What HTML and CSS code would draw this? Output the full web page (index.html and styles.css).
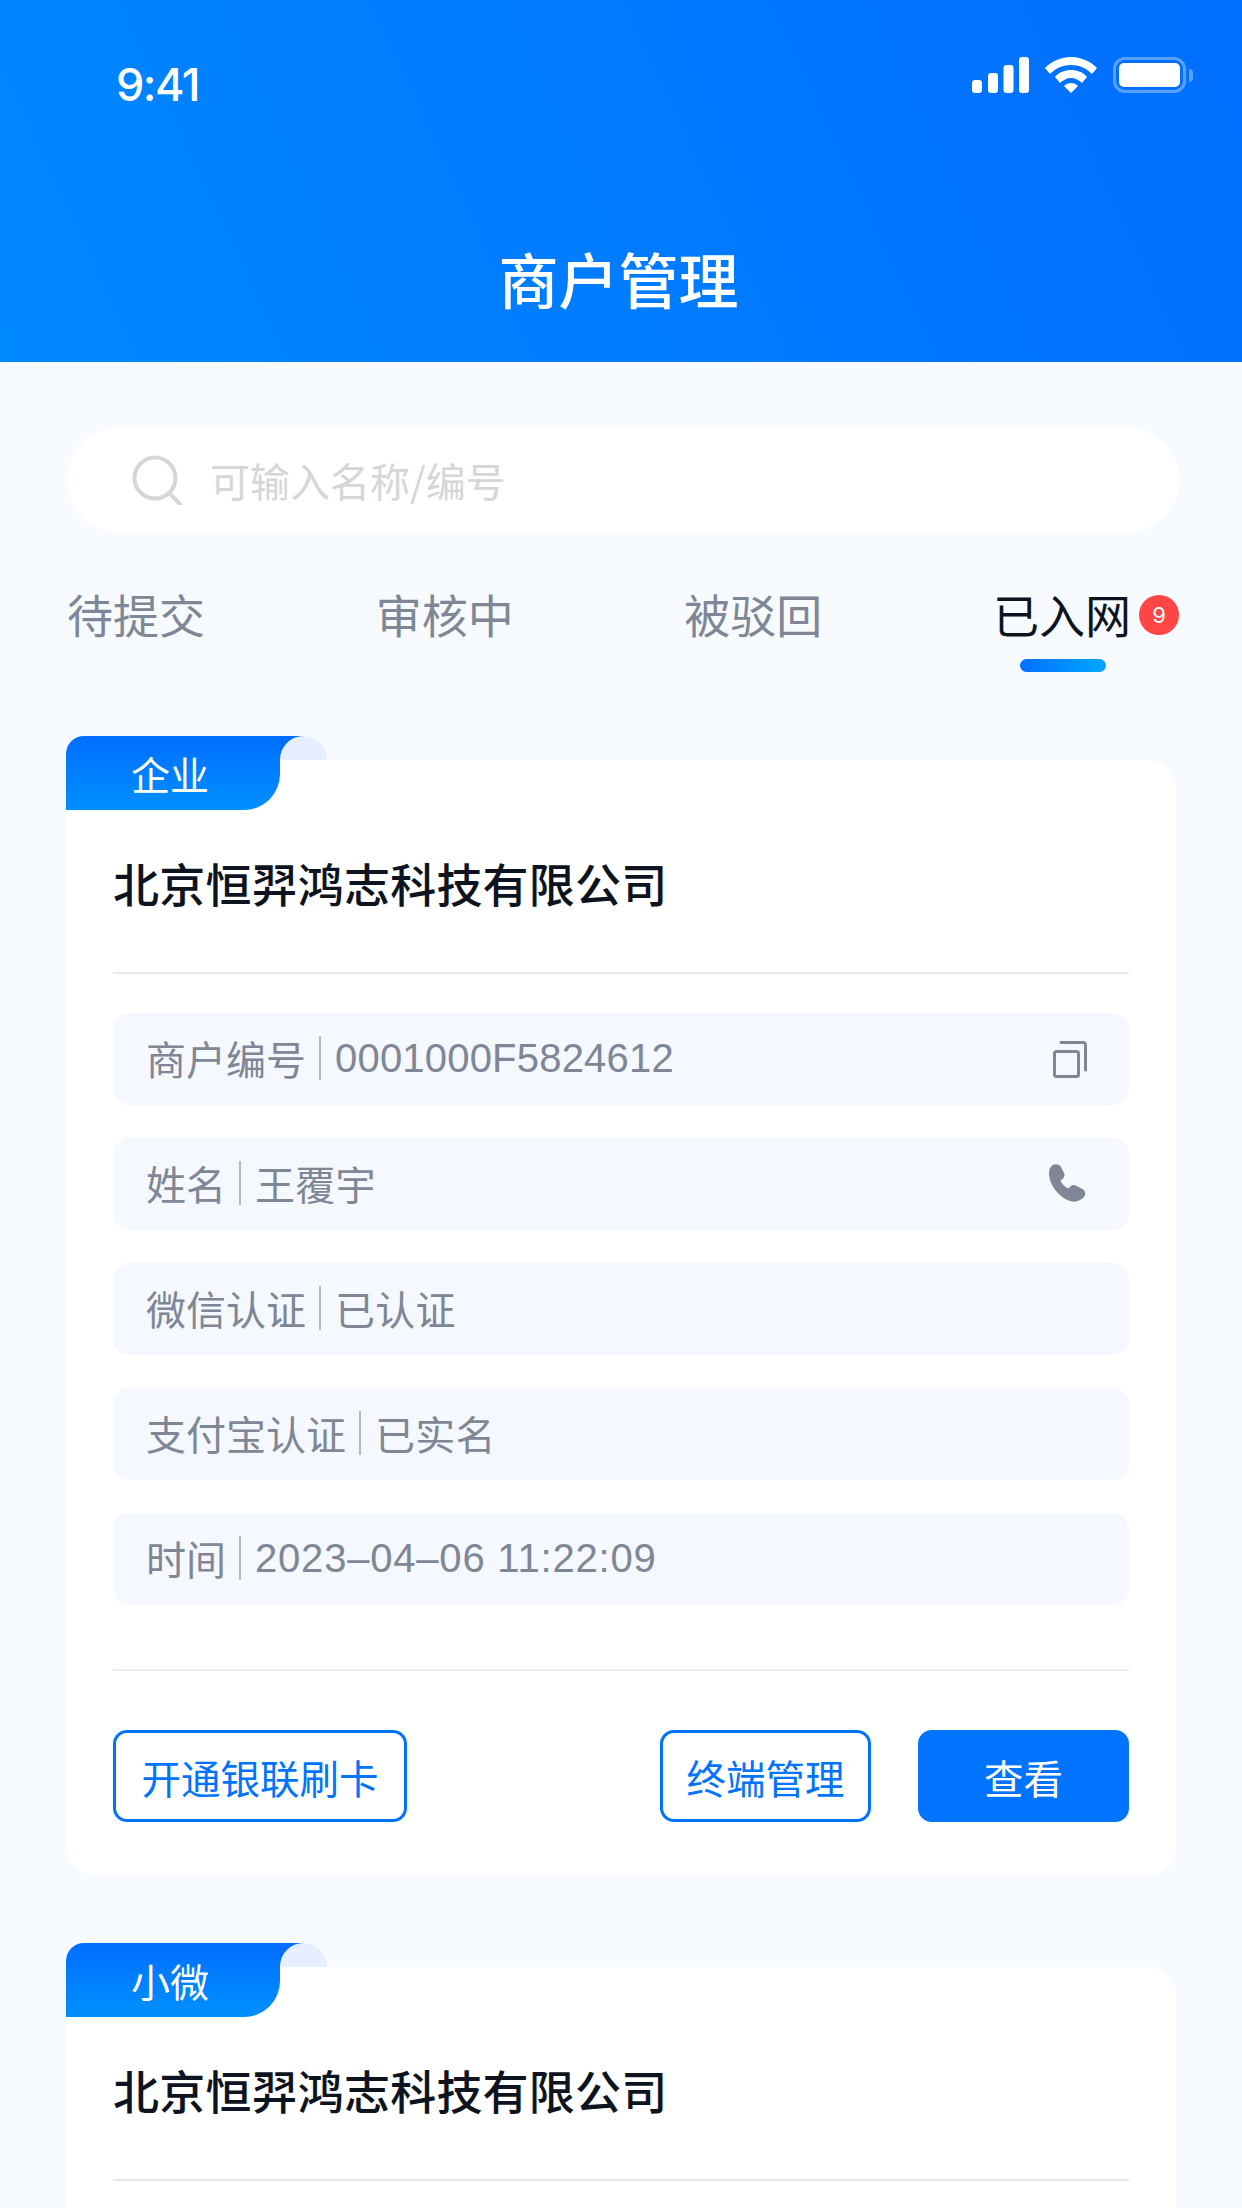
FILE: index.html
```html
<!DOCTYPE html>
<html lang="zh-CN">
<head>
    <meta charset="UTF-8">
    <meta name="viewport" content="width=device-width, initial-scale=1.0">
    <title>商户管理</title>
    <link rel="stylesheet" href="styles.css">
</head>
<body>
    <header class="header">
        <div class="status-bar">
            <span class="time">9:41</span>
            <div class="status-icons">
                <svg class="signal" width="57" height="36" viewBox="0 0 57 36">
                    <rect x="0" y="23" width="10" height="13" rx="3"/>
                    <rect x="16" y="16" width="10" height="20" rx="3"/>
                    <rect x="31.500" y="8" width="10" height="28" rx="3"/>
                    <rect x="47" y="0" width="10" height="36" rx="3"/>
                </svg>
                <svg class="wifi" width="52" height="36" viewBox="0 0 52 36">
                    <path d="M26 0C16 0 7 4 0 11l5 6c6-6 13-9 21-9s15 3 21 9l5-6C45 4 36 0 26 0z"/>
                    <path d="M26 13c-6 0-12 2-16 7l5 6c3-3 7-5 11-5s8 2 11 5l5-6c-4-5-10-7-16-7z"/>
                    <path d="M26 26c-3 0-5 1-7 3l7 7 7-7c-2-2-4-3-7-3z"/>
                </svg>
                <div class="battery">
                    <div class="battery-body"><div class="battery-level"></div></div>
                    <div class="battery-cap"></div>
                </div>
            </div>
        </div>
        <h1 class="page-title">商户管理</h1>
    </header>

    <main class="content">
        <div class="search">
            <svg width="50" height="50" viewBox="0 0 50 50" fill="none" stroke="#d6d6d6" stroke-width="4">
                <circle cx="23" cy="23" r="20.500"/>
                <path d="M37 38l11 11" stroke-linecap="round"/>
            </svg>
            <span class="search-text">可输入名称/编号</span>
        </div>

        <nav class="tabs">
            <div class="tab">待提交</div>
            <div class="tab">审核中</div>
            <div class="tab">被驳回</div>
            <div class="tab active">已入网<span class="badge">9</span></div>
        </nav>

        <section class="card">
            <div class="tag"><span>企业</span></div>
            <h2 class="card-title">北京恒羿鸿志科技有限公司</h2>
            <div class="rows">
                <div class="row">
                    <span class="row-label">商户编号</span><span class="row-value">0001000F5824612</span>
                    <svg class="row-icon icon-copy" width="34" height="37" viewBox="0 0 34 37" fill="none" stroke="#7f8695" stroke-width="3">
                        <rect x="1.500" y="10.500" width="24" height="25" rx="2"/>
                        <path d="M8 1.500h22a2.500 2.500 0 0 1 2.500 2.500v25" stroke-linecap="round"/>
                    </svg>
                </div>
                <div class="row">
                    <span class="row-label">姓名</span><span class="row-value">王覆宇</span>
                    <svg class="row-icon" width="38" height="38" viewBox="0 0 38 38" fill="#7f8695">
                        <path d="M3 1.500C6-.5 10-.5 12 3l3 6c1 2 .5 4-1 5.500l-2.500 2c1.500 3.500 4 6 7.500 8l2.500-2c1.500-1.500 3.500-1.800 5.500-.8l6.500 3.300c3 1.500 3.500 5.500 1.500 8C32 36 28 38.500 23 37.500 12 35 2 24 .2 12 -.5 7.500 .5 4 3 1.500z"/>
                    </svg>
                </div>
                <div class="row">
                    <span class="row-label">微信认证</span><span class="row-value">已认证</span>
                </div>
                <div class="row">
                    <span class="row-label">支付宝认证</span><span class="row-value">已实名</span>
                </div>
                <div class="row">
                    <span class="row-label">时间</span><span class="row-value row-time">2023–04–06 11:22:09</span>
                </div>
            </div>
            <div class="actions">
                <button class="btn btn-wide">开通银联刷卡</button>
                <div class="actions-right">
                    <button class="btn">终端管理</button>
                    <button class="btn btn-primary">查看</button>
                </div>
            </div>
        </section>

        <section class="card">
            <div class="tag"><span>小微</span></div>
            <h2 class="card-title">北京恒羿鸿志科技有限公司</h2>
        </section>
    </main>
</body>
</html>
```

FILE: styles.css
```css
* {
    box-sizing: border-box;
}
html, body {
    height: 2208px;
    overflow: hidden;
}
body {
    margin: 0;
    background: #f7faff;
    font-family: "Noto Sans CJK SC", "Noto Sans", sans-serif;
    color: #0d1420;
}
.header {
    height: 362px;
    background: linear-gradient(65deg, #0088ff, #006eff);
    color: #fff;
    padding: 57px 49px 0 116px;
}
.status-bar {
    display: flex;
    justify-content: space-between;
    height: 53px;
}
.time {
    font-family: Inter, sans-serif;
    font-size: 45px;
    font-weight: 500;
    line-height: 56px;
    letter-spacing: -1.500px;
}
.status-icons {
    display: flex;
    align-items: flex-start;
    gap: 16px;
}
.signal, .wifi {
    fill: #fff;
}
.battery {
    display: flex;
    align-items: center;
    gap: 3px;
}
.battery-body {
    width: 73px;
    height: 36px;
    padding: 3px;
    border: 3px solid rgba(255, 255, 255, 0.35);
    border-radius: 12px;
}
.battery-level {
    height: 100%;
    background: #fff;
    border-radius: 5px;
}
.battery-cap {
    width: 4px;
    height: 13px;
    background: rgba(255, 255, 255, 0.35);
    border-radius: 0 4px 4px 0;
}
.page-title {
    margin: 0 -44px 0 -116px;
    padding-top: 128px;
    text-align: center;
    font-size: 60px;
    font-weight: 500;
    line-height: 80px;
}
.content {
    padding: 65px 66px 0;
}
.search {
    display: flex;
    align-items: center;
    gap: 28px;
    height: 106px;
    padding-left: 65px;
    margin: 0 -3px 0 1px;
    background: #fff;
    border-radius: 53px;
}
.search-text {
    font-size: 40px;
    color: #d6d6d6;
}
.tabs {
    display: flex;
    justify-content: space-between;
    height: 135px;
    padding-top: 48px;
    margin-right: -3px;
    margin-left: 1px;
}
.tab {
    position: relative;
    font-size: 46px;
    line-height: 64px;
    color: #7f8695;
}
.tab.active {
    color: #0d1420;
    padding-right: 48px;
}
.tab.active::after {
    content: "";
    position: absolute;
    left: 27px;
    top: 78px;
    width: 86px;
    height: 13px;
    border-radius: 7px;
    background: linear-gradient(90deg, #006fff, #00a8ff);
}
.badge {
    position: absolute;
    right: 0;
    top: 14px;
    width: 40px;
    height: 40px;
    border-radius: 50%;
    background: #ff4545;
    color: #fff;
    font-family: Inter, sans-serif;
    font-size: 22px;
    line-height: 40px;
    text-align: center;
}
.card {
    position: relative;
    background: #fff;
    border-radius: 28px;
    padding: 0 47px 53px;
    margin-top: 92px;
}
.tag {
    position: absolute;
    left: 0;
    top: -24px;
    width: 214px;
    height: 74px;
    background: linear-gradient(180deg, #006eff, #0090ff);
    border-radius: 18px 0 36px 0;
}
/* blue runs on under the flap's rounded corner */
.tag::before {
    content: "";
    position: absolute;
    left: 214px;
    top: 0;
    width: 24px;
    height: 24px;
    background: #006eff;
}
.tag::after {
    content: "";
    position: absolute;
    left: 214px;
    top: 0;
    width: 47px;
    height: 24px;
    background: #e5efff;
    border-radius: 24px 24px 0 0;
}
.tag span {
    display: block;
    padding-right: 6px;
    font-size: 39px;
    line-height: 75px;
    text-align: center;
    color: #fff;
}
.card-title {
    margin: 0;
    height: 214px;
    padding-top: 88px;
    font-size: 46px;
    font-weight: 500;
    line-height: 68px;
    letter-spacing: 0.200px;
    border-bottom: 2px solid #e9e9ec;
}
.rows {
    display: flex;
    flex-direction: column;
    gap: 33px;
    padding: 39px 0 64px;
    border-bottom: 2px solid #ececee;
}
.row {
    display: flex;
    align-items: center;
    height: 92px;
    padding: 0 42px 2px 33px;
    background: #f5f8ff;
    border-radius: 16px;
    font-family: "Liberation Sans", "Noto Sans CJK SC", sans-serif;
    font-size: 40px;
    color: #7f8695;
}
.row-label {
    position: relative;
    padding-right: 15px;
    margin-right: 14px;
}
.row-label::after {
    content: "";
    position: absolute;
    right: 0;
    top: 7px;
    bottom: 7px;
    width: 2px;
    background: #b4b8c2;
}
.row-value {
    letter-spacing: 0.200px;
}
.row-time {
    letter-spacing: 0.800px;
}
.row-icon {
    margin-left: auto;
}
.icon-copy {
    margin-top: 3px;
}
.actions {
    display: flex;
    justify-content: space-between;
    padding-top: 59px;
}
.actions-right {
    display: flex;
    gap: 47px;
}
.btn {
    width: 211px;
    height: 92px;
    padding: 0;
    border: 3px solid #0073ff;
    border-radius: 14px;
    background: #fff;
    color: #0073ff;
    font-family: inherit;
    font-size: 39.500px;
}
.btn-wide {
    width: 294px;
}
.btn-primary {
    background: #0073ff;
    color: #fff;
}
```
